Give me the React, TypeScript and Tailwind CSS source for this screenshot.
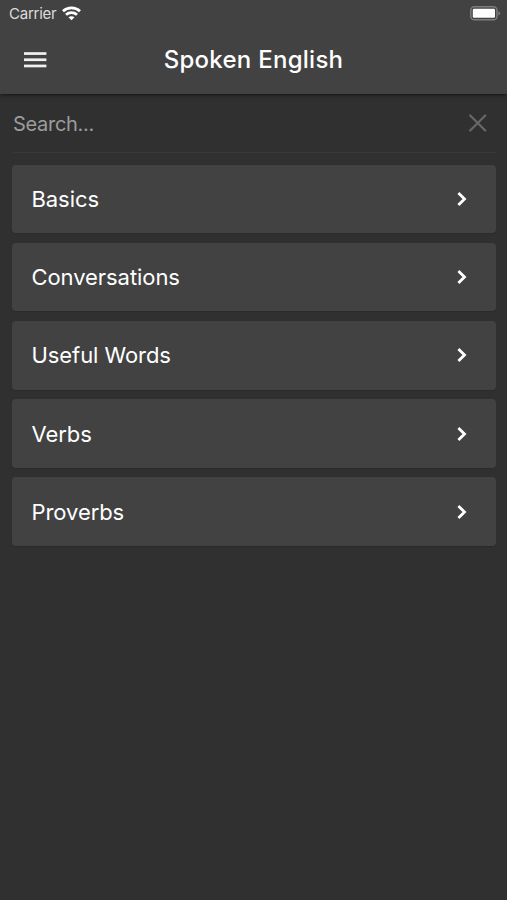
import React, { useState } from 'react';

const categories = ['Basics', 'Conversations', 'Useful Words', 'Verbs', 'Proverbs'];

function WifiIcon() {
  return (
    <svg width="19" height="15" viewBox="0 0 19 15" fill="none" stroke="#fff" strokeWidth="2.8">
      <path d="M1 5.2C5.7.8 13.3.8 18 5.2" />
      <path d="M4 8.7c3.1-2.8 7.9-2.8 11 0" />
      <path d="M9.5 14.2 6.5 11.300c1.600-1.500 4.400-1.500 6 0z" fill="#fff" stroke="none" />
    </svg>
  );
}

function BatteryIcon() {
  return (
    <svg width="31" height="15" viewBox="0 0 31 15">
      <rect x="0.8" y="0.8" width="26.2" height="13" rx="3.6" fill="none" stroke="#7c7c7c" strokeWidth="1.5" />
      <rect x="2.8" y="2.8" width="22.2" height="9" rx="1.2" fill="#fff" />
      <path d="M28.3 5.2c2.500.8 2.500 3.400 0 4.200z" fill="#7c7c7c" />
    </svg>
  );
}

function MenuIcon() {
  return (
    <svg width="23" height="17" viewBox="0 0 23 17" fill="#f0f0f0">
      <rect width="22.4" height="2.7" y="0.2" />
      <rect width="22.4" height="2.7" y="6.4" />
      <rect width="22.4" height="2.7" y="12.6" />
    </svg>
  );
}

function CloseIcon() {
  return (
    <svg width="18" height="18" viewBox="0 0 18 18" stroke="#676767" strokeWidth="2.3" strokeLinecap="round">
      <path d="M1.2 1.5l15 15M16.2 1.5l-15 15" />
    </svg>
  );
}

function ChevronIcon() {
  return (
    <svg width="10" height="16" viewBox="0 0 10 16" fill="none" stroke="#fff" strokeWidth="2.8">
      <path d="M1.4 2L7.5 8l-6.1 6" />
    </svg>
  );
}

export default function App() {
  const [query, setQuery] = useState('');

  const visible = categories.filter((name) =>
    name.toLowerCase().includes(query.toLowerCase())
  );

  return (
    <div className="flex h-screen flex-col bg-[#303030] font-['Inter',sans-serif] text-white">
      <header className="relative h-[94px] shrink-0 bg-[#424242] shadow-[0_1px_4px_rgba(0,0,0,0.6)]">
        <div className="flex h-[26px] items-center justify-between pl-[9px] pr-[6px]">
          <div className="flex items-center gap-[6px]">
            <span className="text-[15px] leading-none tracking-[-0.25px] text-[#dcdcdc]">Carrier</span>
            <WifiIcon />
          </div>
          <BatteryIcon />
        </div>
        <div className="grid h-[68px] grid-cols-[1fr_auto_1fr] items-center pl-6">
          <button aria-label="Menu">
            <MenuIcon />
          </button>
          <h1 className="pr-6 text-[24px] font-medium tracking-[0.26px]">Spoken English</h1>
        </div>
      </header>

      <main className="pl-3 pr-[11px]">
        <div className="ml-px flex h-[59px] items-center justify-between border-b border-[#383838] pr-[9px]">
          <input
            type="text"
            value={query}
            onChange={(e) => setQuery(e.target.value)}
            placeholder="Search..."
            className="min-w-0 flex-1 bg-transparent pt-0.5 text-[20px] tracking-[-0.3px] outline-none placeholder:text-[#9c9c9c]"
          />
          <button aria-label="Clear" onClick={() => setQuery('')}>
            <CloseIcon />
          </button>
        </div>

        <ul className="mt-[11.7px] flex flex-col gap-[9.7px]">
          {visible.map((name) => (
            <li
              key={name}
              className="flex h-[68.5px] items-center justify-between rounded-[4px] bg-[#424242] pl-[19.5px] pr-[29px] shadow-[0_1px_1px_rgba(0,0,0,0.1)]"
            >
              <span className="pt-px text-[22px] tracking-[-0.07px]">{name}</span>
              <ChevronIcon />
            </li>
          ))}
        </ul>
      </main>
    </div>
  );
}
